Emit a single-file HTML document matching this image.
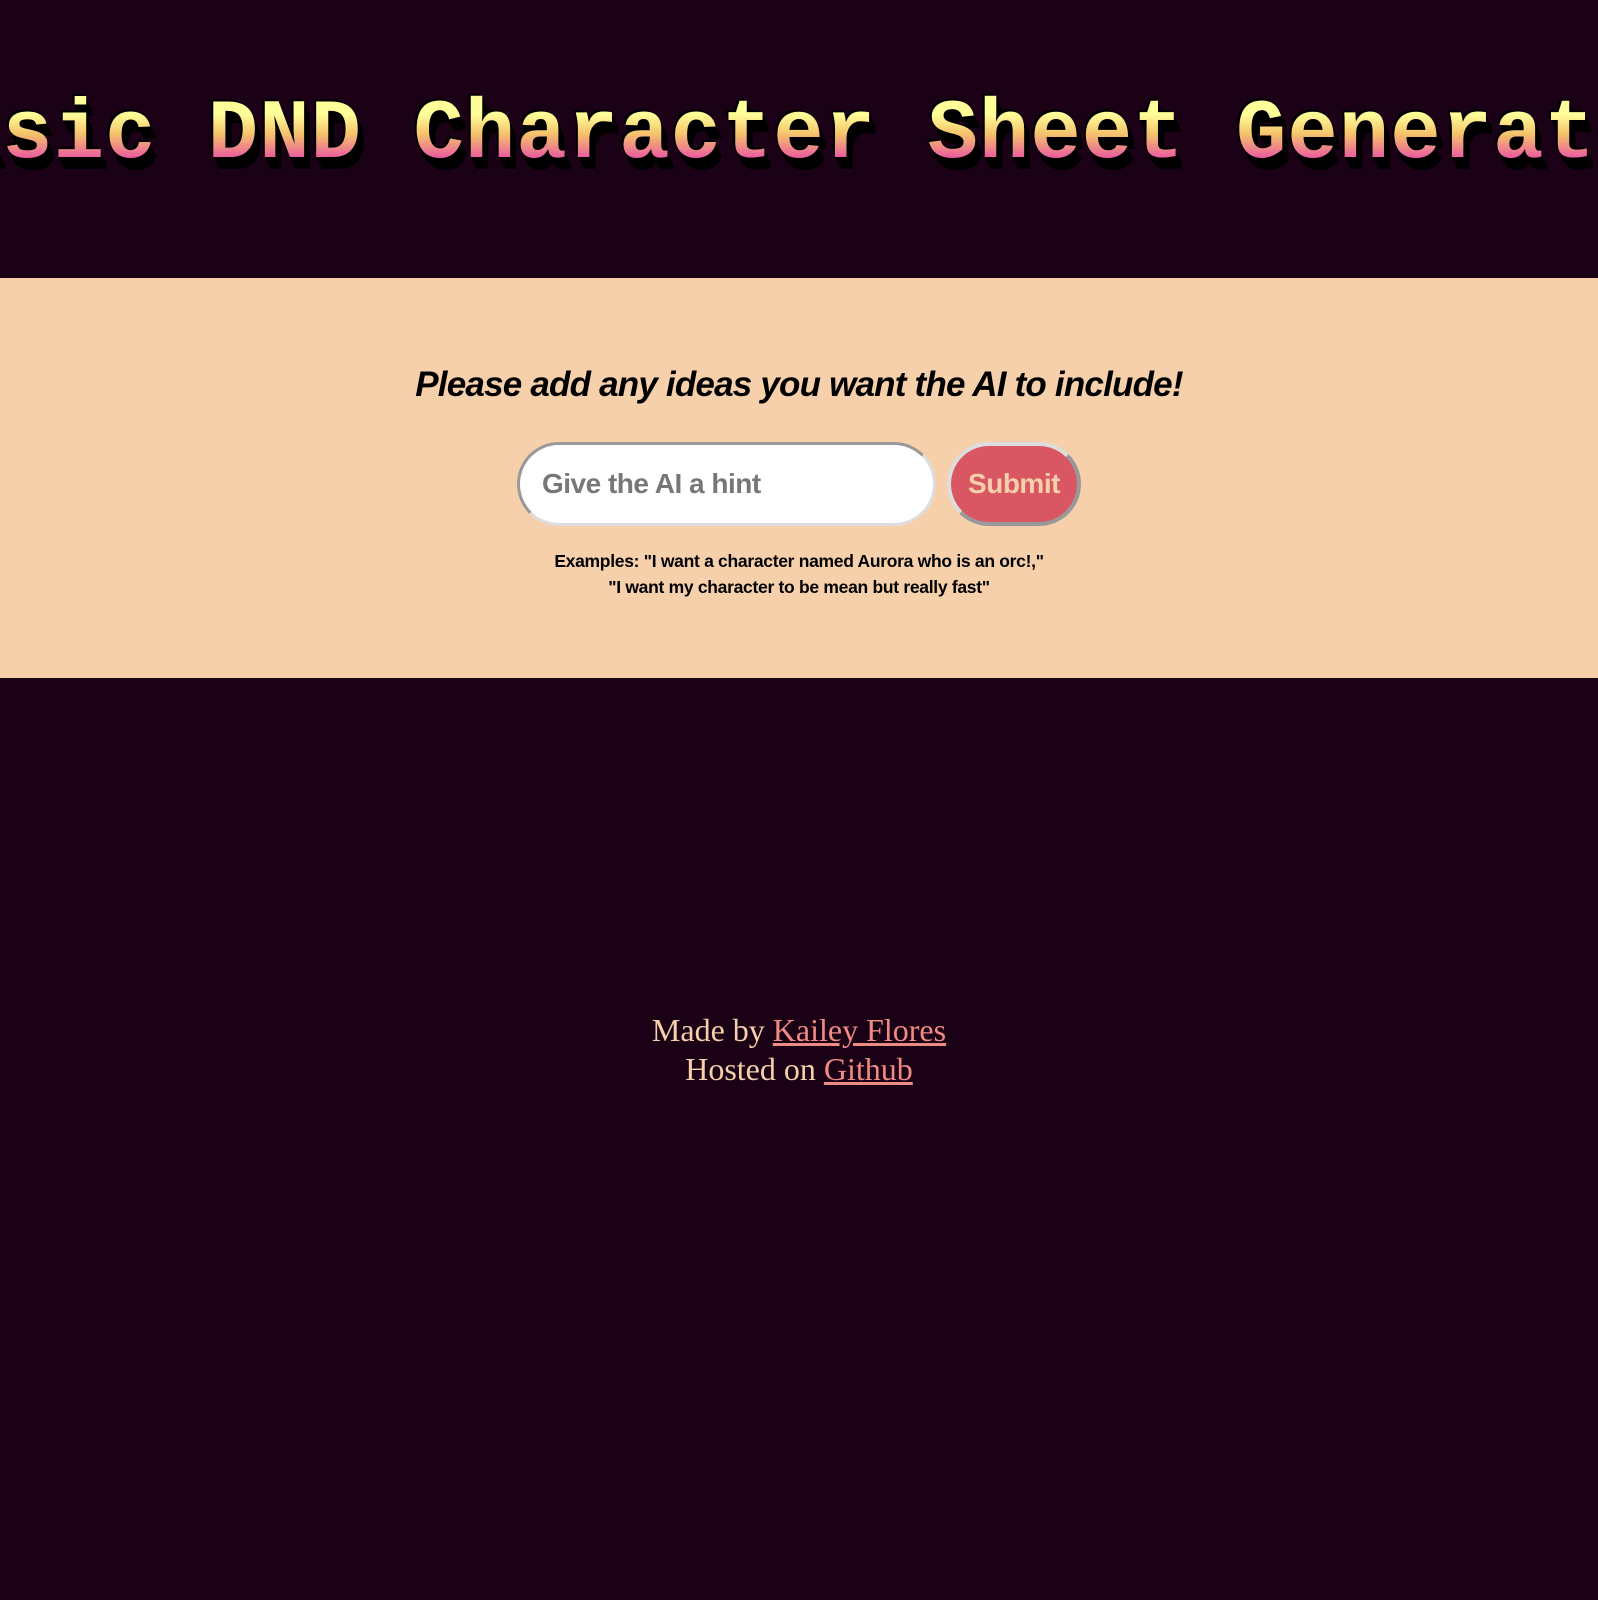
<!DOCTYPE html>
<html><head><meta charset="utf-8"><style>
html,body{margin:0;padding:0;background:#1a0116;width:1598px;height:1600px;overflow:hidden}
.hdr{height:278px;position:relative;overflow:hidden}
.title{position:absolute;left:50%;top:86px;transform:translateX(-50%);white-space:nowrap;font-family:"Liberation Mono","DejaVu Sans Mono",monospace;font-weight:bold;font-size:84px;letter-spacing:1px;line-height:100px;
background:linear-gradient(#ffff99 28%,#f5c26b 48%,#ea5aa0 72%,#e74fa5 100%);-webkit-background-clip:text;background-clip:text;color:transparent;filter:drop-shadow(3px 6px 0 #000) drop-shadow(3px 6px 0 #000) drop-shadow(-2px -2px 0 #000)}
.band{background:#f6cfab;height:400px;text-align:center;font-family:"Liberation Sans",sans-serif}
h2{margin:0;padding-top:82px;font-size:35px;font-style:italic;font-weight:bold;color:#000;line-height:50px;letter-spacing:-0.8px}
.row{margin-top:32px;height:84px;position:relative}
.inp{position:absolute;left:517px;top:0;border-radius:42px;background:#fff;border:3px solid;border-color:#999 #ddd #ddd #999;box-sizing:border-box;width:419px;height:84px;text-align:left;padding-left:22px;font-size:28px;font-weight:bold;color:#777;line-height:78px;letter-spacing:-0.5px}
.btn{position:absolute;left:947px;top:0;width:134px;height:84px;box-sizing:border-box;border-radius:42px;background:#d85763;border:4px solid;border-color:#ddd #999 #999 #ddd;color:#f6cfab;font-size:28px;font-weight:bold;line-height:76px;letter-spacing:-0.5px}
.ex{margin-top:22px;font-size:17.5px;font-weight:bold;line-height:26px;color:#000;letter-spacing:-0.3px}
.foot{text-align:center;font-family:"Liberation Serif",serif;font-size:32px;color:#f6cfab;line-height:39px;margin-top:333px}
.foot a{color:#f08a84;text-decoration:underline}
</style></head><body>
<div class="hdr"><div class="title">Basic DND Character Sheet Generator</div></div>
<div class="band">
<h2>Please add any ideas you want the AI to include!</h2>
<div class="row"><div class="inp">Give the AI a hint</div><div class="btn">Submit</div></div>
<div class="ex">Examples: "I want a character named Aurora who is an orc!,"<br>"I want my character to be mean but really fast"</div>
</div>
<div class="foot">Made by <a>Kailey Flores</a><br>Hosted on <a>Github</a></div>
</body></html>
